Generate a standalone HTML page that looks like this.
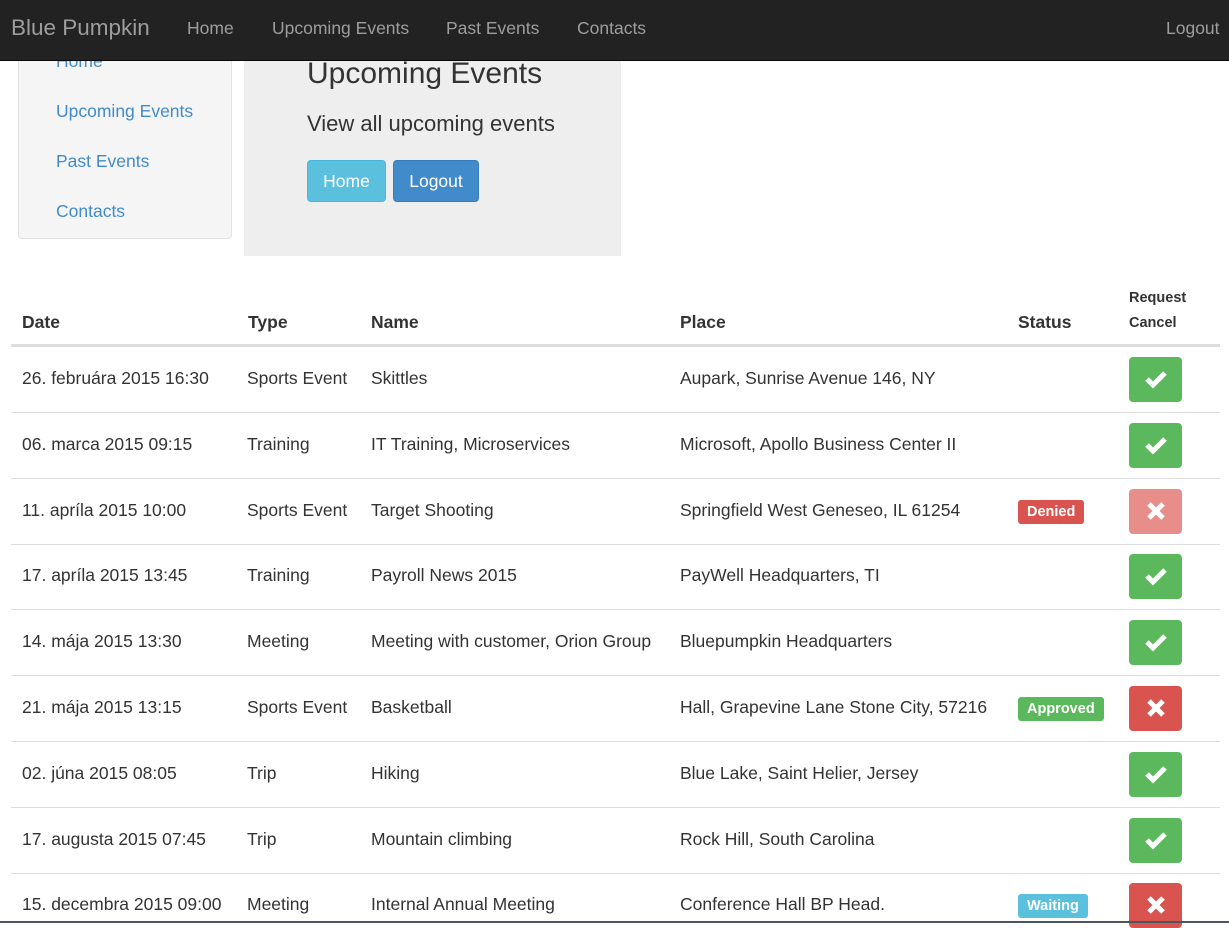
<!DOCTYPE html>
<html><head><style>
*{box-sizing:border-box;margin:0;padding:0}
body{width:1229px;height:923px;overflow:hidden;background:#fff;font-family:"Liberation Sans",Arial,sans-serif;color:#333;position:relative}
.nav{position:absolute;left:0;top:0;width:1229px;height:61px;background:#222;border-bottom:1px solid #080808;z-index:5}
.nav span{position:absolute;top:18px;color:#9d9d9d;font-size:17.5px}
.nav .brand{font-size:22.5px;top:15px;left:11px}
.side{position:absolute;left:18px;top:30px;width:214px;height:209px;background:#f5f5f5;border:1px solid #e3e3e3;border-radius:4px}
.side a{position:absolute;left:37px;color:#428bca;font-size:17.5px}
.jum{position:absolute;left:244px;top:40px;width:377px;height:216px;background:#eee}
.jum h1{position:absolute;left:63px;top:17px;font-size:30px;font-weight:normal;color:#333}
.jum p{position:absolute;left:63px;top:71px;font-size:22px}
.btn{position:absolute;top:120px;height:42px;border-radius:4px;color:#fff;font-size:17.5px;line-height:40px;text-align:center}
.th{position:absolute;top:312px;font-weight:bold;font-size:17.5px}
.line{position:absolute;left:11px;width:1209px;height:1px;background:#ddd}
.c{position:absolute;font-size:17.5px}
.b{position:absolute;left:1129px;width:53px;height:45px;border-radius:4px;color:#fff;text-align:center}
.lab{position:absolute;left:1018px;height:24px;border-radius:3px;color:#fff;font-size:14.5px;font-weight:bold;line-height:24px;padding:0 9px}
</style></head><body>
<div class="nav">
<span class="brand">Blue Pumpkin</span>
<span style="left:187px">Home</span>
<span style="left:272px">Upcoming Events</span>
<span style="left:446px">Past Events</span>
<span style="left:577px">Contacts</span>
<span style="left:1166px">Logout</span>
</div>
<div class="side">
<a style="top:20px">Home</a>
<a style="top:70px">Upcoming Events</a>
<a style="top:120px">Past Events</a>
<a style="top:170px">Contacts</a>
</div>
<div class="jum">
<h1>Upcoming Events</h1>
<p>View all upcoming events</p>
<div class="btn" style="left:63px;width:79px;background:#5bc0de;border:1px solid #46b8da">Home</div>
<div class="btn" style="left:149px;width:86px;background:#428bca;border:1px solid #357ebd">Logout</div>
</div>
<div class="th" style="left:22px">Date</div>
<div class="th" style="left:248px">Type</div>
<div class="th" style="left:371px">Name</div>
<div class="th" style="left:680px">Place</div>
<div class="th" style="left:1018px">Status</div>
<div class="th" style="left:1129px;top:286px;font-size:14.5px;line-height:25px">Request<br>Cancel</div>
<div class="line" style="top:344px;height:3px"></div>
<div id="rows"></div>
<div style="position:absolute;left:0;top:921px;width:1229px;height:2px;background:#4a5560"></div>
<script>
var d=[["26. februára 2015 16:30","Sports Event","Skittles","Aupark, Sunrise Avenue 146, NY","","g"],
["06. marca 2015 09:15","Training","IT Training, Microservices","Microsoft, Apollo Business Center II","","g"],
["11. apríla 2015 10:00","Sports Event","Target Shooting","Springfield West Geneseo, IL 61254","Denied","p"],
["17. apríla 2015 13:45","Training","Payroll News 2015","PayWell Headquarters, TI","","g"],
["14. mája 2015 13:30","Meeting","Meeting with customer, Orion Group","Bluepumpkin Headquarters","","g"],
["21. mája 2015 13:15","Sports Event","Basketball","Hall, Grapevine Lane Stone City, 57216","Approved","r"],
["02. júna 2015 08:05","Trip","Hiking","Blue Lake, Saint Helier, Jersey","","g"],
["17. augusta 2015 07:45","Trip","Mountain climbing","Rock Hill, South Carolina","","g"],
["15. decembra 2015 09:00","Meeting","Internal Annual Meeting","Conference Hall BP Head.","Waiting","r"]];
var h="",xs=[22,247,371,680];
d.forEach(function(r,i){var y=347+i*65.8;
for(var k=0;k<4;k++)h+='<div class="c" style="left:'+xs[k]+'px;top:'+(y+21)+'px">'+r[k]+'</div>';
if(r[4]){var col=r[4]=="Denied"?"#d9534f":r[4]=="Approved"?"#5cb85c":"#5bc0de";h+='<div class="lab" style="top:'+(y+21)+'px;background:'+col+'">'+r[4]+'</div>';}
var bg=r[5]=="g"?"#5cb85c":r[5]=="p"?"#e78e8b":"#d9534f";
h+='<div class="b" style="top:'+(y+10)+'px;background:'+bg+'">'+(r[5]=="g"?'<svg width="24" height="20" viewBox="0 0 24 20" style="margin-top:12px"><path d="M3 10l6 6L21 4" stroke="#fff" stroke-width="5" fill="none"/></svg>':'<svg width="20" height="20" viewBox="0 0 20 20" style="margin-top:12px"><path d="M3 3l14 14M17 3L3 17" stroke="#fff" stroke-width="5"/></svg>')+'</div>';
if(i<8)h+='<div class="line" style="top:'+Math.round(y+65)+'px"></div>';});
document.getElementById("rows").innerHTML=h;
</script>
</body></html>
